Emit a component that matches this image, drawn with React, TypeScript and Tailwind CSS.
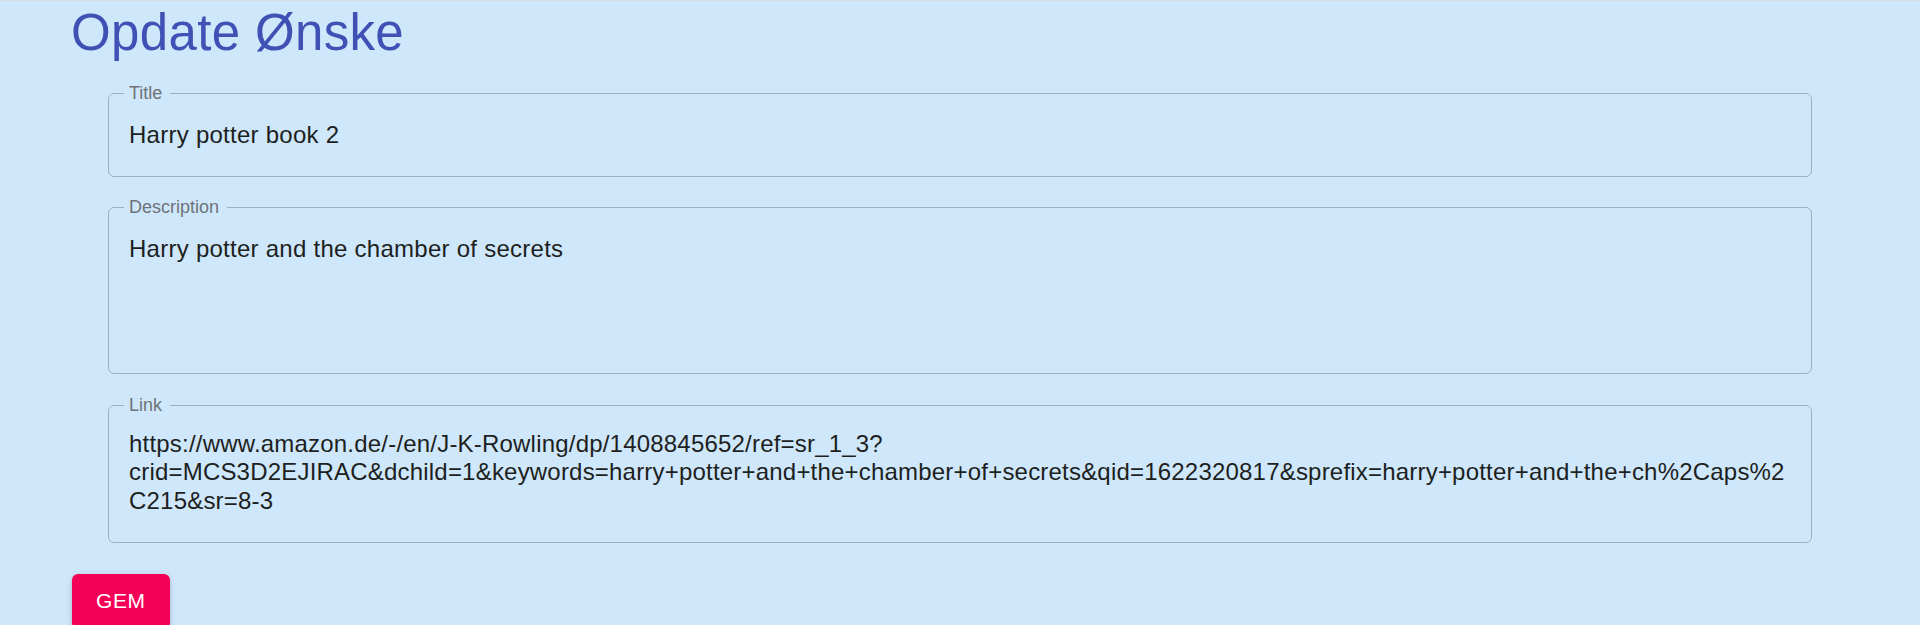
import React from 'react'

const LINK =
  'https://www.amazon.de/-/en/J-K-Rowling/dp/1408845652/ref=sr_1_3?crid=MCS3D2EJIRAC&dchild=1&keywords=harry+potter+and+the+chamber+of+secrets&qid=1622320817&sprefix=harry+potter+and+the+ch%2Caps%2C215&sr=8-3'

interface FieldProps {
  label: string
  children: React.ReactNode
  className: string
}

// Outlined field with the label sitting in a notch of the border
function Field({ label, children, className }: FieldProps) {
  return (
    <div className={`relative mx-[36px] rounded-[6px] border border-[#9fb1c1] px-[20px] ${className}`}>
      <span className="absolute left-[15px] -top-[10px] bg-[#cfe7fb] pl-[5px] pr-[8px] text-[18px] leading-[18px] text-[#6d7378]">
        {label}
      </span>
      {children}
    </div>
  )
}

export default function App() {
  return (
    <div className="min-h-screen border-t border-[#d8dce1] bg-[#cfe7fb] font-['Liberation_Sans',Arial,sans-serif] text-[#1d1f21]">
      <div className="px-[72px]">
        <h1 className="-ml-px text-[51px] font-normal leading-[63px] tracking-[0.35px] text-[#3f51b5]">Opdate Ønske</h1>

        <form className="mt-[29px] flex flex-col" onSubmit={(e) => e.preventDefault()}>
          {/* Title */}
          <Field label="Title" className="h-[84px] pt-[26.75px]">
            <input
              type="text"
              defaultValue="Harry potter book 2"
              className="block h-[28.5px] w-full bg-transparent text-[24px] tracking-[0.26px] outline-none"
            />
          </Field>

          {/* Description */}
          <Field label="Description" className="mt-[30px] h-[167px] pt-[26.75px]">
            <textarea
              rows={4}
              defaultValue="Harry potter and the chamber of secrets"
              className="block w-full resize-none overflow-hidden bg-transparent text-[24px] leading-[28.5px] tracking-[0.26px] outline-none"
            />
          </Field>

          {/* Link */}
          <Field label="Link" className="mt-[31px] h-[138px] pt-[23.75px]">
            <textarea
              rows={3}
              defaultValue={LINK}
              className="block w-full resize-none overflow-hidden bg-transparent text-[24px] leading-[28.5px] tracking-[0.2px] outline-none"
            />
          </Field>

          <div className="mt-[31px]">
            <button
              type="submit"
              className="rounded-[6px] bg-[#f50057] px-[24px] py-[9px] text-[21px] font-medium uppercase leading-[36.75px] tracking-[0.6px] text-white shadow-[0_4.5px_1.5px_-3px_rgba(0,0,0,0.2),0_3px_3px_0_rgba(0,0,0,0.14),0_1.5px_7.5px_0_rgba(0,0,0,0.12)]"
            >
              Gem
            </button>
          </div>
        </form>
      </div>
    </div>
  )
}
